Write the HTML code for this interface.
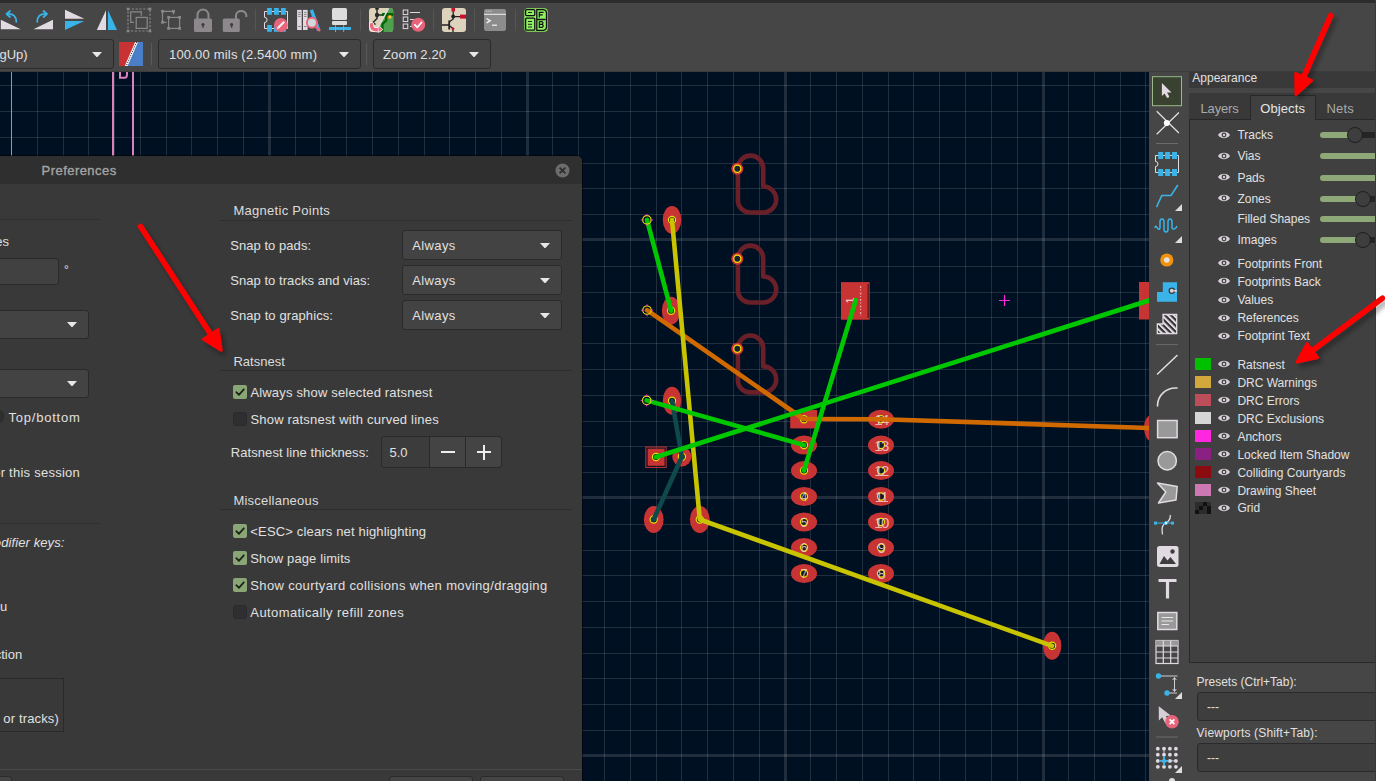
<!DOCTYPE html><html><head><meta charset="utf-8"><style>
html,body{margin:0;padding:0;}
body{width:1385px;height:781px;overflow:hidden;position:relative;background:#ffffff;font-family:"Liberation Sans", sans-serif;}
.b{position:absolute;box-sizing:border-box;}
.t{position:absolute;white-space:nowrap;}
svg{position:absolute;overflow:hidden;}
</style></head><body>
<div class="b" style="left:0px;top:0px;width:1376px;height:3px;background:#2c2c2c;"></div>
<div class="b" style="left:0px;top:3px;width:1376px;height:69px;background:#464646;"></div>
<svg style="left:0;top:72px" width="1149" height="709" viewBox="0 72 1149 709"><rect x="0" y="72" width="1149" height="709" fill="#001023"/><rect x="37" y="72" width="1" height="709" fill="rgba(255,255,255,0.125)"/><rect x="63" y="72" width="1" height="709" fill="rgba(255,255,255,0.125)"/><rect x="88" y="72" width="1" height="709" fill="rgba(255,255,255,0.125)"/><rect x="114" y="72" width="1" height="709" fill="rgba(255,255,255,0.125)"/><rect x="140" y="72" width="1" height="709" fill="rgba(255,255,255,0.125)"/><rect x="166" y="72" width="1" height="709" fill="rgba(255,255,255,0.125)"/><rect x="191" y="72" width="1" height="709" fill="rgba(255,255,255,0.125)"/><rect x="217" y="72" width="1" height="709" fill="rgba(255,255,255,0.125)"/><rect x="243" y="72" width="1" height="709" fill="rgba(255,255,255,0.125)"/><rect x="268" y="72" width="3" height="709" fill="rgba(255,255,255,0.12)"/><rect x="295" y="72" width="1" height="709" fill="rgba(255,255,255,0.125)"/><rect x="320" y="72" width="1" height="709" fill="rgba(255,255,255,0.125)"/><rect x="346" y="72" width="1" height="709" fill="rgba(255,255,255,0.125)"/><rect x="372" y="72" width="1" height="709" fill="rgba(255,255,255,0.125)"/><rect x="398" y="72" width="1" height="709" fill="rgba(255,255,255,0.125)"/><rect x="424" y="72" width="1" height="709" fill="rgba(255,255,255,0.125)"/><rect x="449" y="72" width="1" height="709" fill="rgba(255,255,255,0.125)"/><rect x="475" y="72" width="1" height="709" fill="rgba(255,255,255,0.125)"/><rect x="501" y="72" width="1" height="709" fill="rgba(255,255,255,0.125)"/><rect x="526" y="72" width="3" height="709" fill="rgba(255,255,255,0.12)"/><rect x="552" y="72" width="1" height="709" fill="rgba(255,255,255,0.125)"/><rect x="578" y="72" width="1" height="709" fill="rgba(255,255,255,0.125)"/><rect x="604" y="72" width="1" height="709" fill="rgba(255,255,255,0.125)"/><rect x="630" y="72" width="1" height="709" fill="rgba(255,255,255,0.125)"/><rect x="656" y="72" width="1" height="709" fill="rgba(255,255,255,0.125)"/><rect x="681" y="72" width="1" height="709" fill="rgba(255,255,255,0.125)"/><rect x="707" y="72" width="1" height="709" fill="rgba(255,255,255,0.125)"/><rect x="733" y="72" width="1" height="709" fill="rgba(255,255,255,0.125)"/><rect x="759" y="72" width="1" height="709" fill="rgba(255,255,255,0.125)"/><rect x="784" y="72" width="3" height="709" fill="rgba(255,255,255,0.12)"/><rect x="810" y="72" width="1" height="709" fill="rgba(255,255,255,0.125)"/><rect x="836" y="72" width="1" height="709" fill="rgba(255,255,255,0.125)"/><rect x="862" y="72" width="1" height="709" fill="rgba(255,255,255,0.125)"/><rect x="888" y="72" width="1" height="709" fill="rgba(255,255,255,0.125)"/><rect x="913" y="72" width="1" height="709" fill="rgba(255,255,255,0.125)"/><rect x="939" y="72" width="1" height="709" fill="rgba(255,255,255,0.125)"/><rect x="965" y="72" width="1" height="709" fill="rgba(255,255,255,0.125)"/><rect x="991" y="72" width="1" height="709" fill="rgba(255,255,255,0.125)"/><rect x="1017" y="72" width="1" height="709" fill="rgba(255,255,255,0.125)"/><rect x="1042" y="72" width="3" height="709" fill="rgba(255,255,255,0.12)"/><rect x="1068" y="72" width="1" height="709" fill="rgba(255,255,255,0.125)"/><rect x="1094" y="72" width="1" height="709" fill="rgba(255,255,255,0.125)"/><rect x="1120" y="72" width="1" height="709" fill="rgba(255,255,255,0.125)"/><rect x="1145" y="72" width="1" height="709" fill="rgba(255,255,255,0.125)"/><rect x="0" y="85" width="1149" height="1" fill="rgba(255,255,255,0.125)"/><rect x="0" y="111" width="1149" height="1" fill="rgba(255,255,255,0.125)"/><rect x="0" y="137" width="1149" height="1" fill="rgba(255,255,255,0.125)"/><rect x="0" y="163" width="1149" height="1" fill="rgba(255,255,255,0.125)"/><rect x="0" y="188" width="1149" height="1" fill="rgba(255,255,255,0.125)"/><rect x="0" y="214" width="1149" height="1" fill="rgba(255,255,255,0.125)"/><rect x="0" y="238" width="1149" height="3" fill="rgba(255,255,255,0.12)"/><rect x="0" y="266" width="1149" height="1" fill="rgba(255,255,255,0.125)"/><rect x="0" y="292" width="1149" height="1" fill="rgba(255,255,255,0.125)"/><rect x="0" y="317" width="1149" height="1" fill="rgba(255,255,255,0.125)"/><rect x="0" y="343" width="1149" height="1" fill="rgba(255,255,255,0.125)"/><rect x="0" y="369" width="1149" height="1" fill="rgba(255,255,255,0.125)"/><rect x="0" y="395" width="1149" height="1" fill="rgba(255,255,255,0.125)"/><rect x="0" y="421" width="1149" height="1" fill="rgba(255,255,255,0.125)"/><rect x="0" y="446" width="1149" height="1" fill="rgba(255,255,255,0.125)"/><rect x="0" y="472" width="1149" height="1" fill="rgba(255,255,255,0.125)"/><rect x="0" y="496" width="1149" height="3" fill="rgba(255,255,255,0.12)"/><rect x="0" y="524" width="1149" height="1" fill="rgba(255,255,255,0.125)"/><rect x="0" y="550" width="1149" height="1" fill="rgba(255,255,255,0.125)"/><rect x="0" y="575" width="1149" height="1" fill="rgba(255,255,255,0.125)"/><rect x="0" y="601" width="1149" height="1" fill="rgba(255,255,255,0.125)"/><rect x="0" y="627" width="1149" height="1" fill="rgba(255,255,255,0.125)"/><rect x="0" y="653" width="1149" height="1" fill="rgba(255,255,255,0.125)"/><rect x="0" y="678" width="1149" height="1" fill="rgba(255,255,255,0.125)"/><rect x="0" y="704" width="1149" height="1" fill="rgba(255,255,255,0.125)"/><rect x="0" y="730" width="1149" height="1" fill="rgba(255,255,255,0.125)"/><rect x="0" y="754" width="1149" height="3" fill="rgba(255,255,255,0.12)"/><rect x="11" y="72" width="1" height="709" fill="#9a9a9a"/><rect x="112" y="72" width="2" height="100" fill="#dc80bf"/><rect x="132" y="72" width="2" height="100" fill="#dc80bf"/><path d="M120 72 V77.8 H124.6 Q127 77.8 127 74.6 V72" fill="none" stroke="#dc80bf" stroke-width="2"/><path d="M737.9,168.8 L737.9,168.3 A12.65 12.65 0 0 1 763.2,168.3 L763.2,186.5 A13 13 0 0 1 763.2,212.5 L749.9,212.5 A12 12 0 0 1 737.9,200.5 Z" fill="none" stroke="#6a2029" stroke-width="4.6" stroke-linejoin="round"/><circle cx="737.3" cy="168.8" r="6" fill="#d03636"/><circle cx="737.3" cy="168.8" r="3.6" fill="#1a2230" stroke="#f0e000" stroke-width="1.3"/><path d="M737.9,258.8 L737.9,258.3 A12.65 12.65 0 0 1 763.2,258.3 L763.2,276.5 A13 13 0 0 1 763.2,302.5 L749.9,302.5 A12 12 0 0 1 737.9,290.5 Z" fill="none" stroke="#6a2029" stroke-width="4.6" stroke-linejoin="round"/><circle cx="737.3" cy="258.8" r="6" fill="#d03636"/><circle cx="737.3" cy="258.8" r="3.6" fill="#1a2230" stroke="#f0e000" stroke-width="1.3"/><path d="M737.9,348.7 L737.9,348.2 A12.65 12.65 0 0 1 763.2,348.2 L763.2,366.4 A13 13 0 0 1 763.2,392.4 L749.9,392.4 A12 12 0 0 1 737.9,380.4 Z" fill="none" stroke="#6a2029" stroke-width="4.6" stroke-linejoin="round"/><circle cx="737.3" cy="348.7" r="6" fill="#d03636"/><circle cx="737.3" cy="348.7" r="3.6" fill="#1a2230" stroke="#f0e000" stroke-width="1.3"/><ellipse cx="672" cy="219.9" rx="9.25" ry="14.0" fill="#c83434"/><ellipse cx="671.1" cy="310.7" rx="9.25" ry="14.0" fill="#c83434"/><ellipse cx="672" cy="400.7" rx="9.25" ry="14.0" fill="#c83434"/><ellipse cx="1052.1" cy="645.8" rx="9.25" ry="14.0" fill="#c83434"/><ellipse cx="653.7" cy="519.5" rx="9.9" ry="13.5" fill="#c83434"/><ellipse cx="699.8" cy="519.5" rx="9.9" ry="13.5" fill="#c83434"/><rect x="645.9" y="447" width="20.2" height="20.4" fill="none" stroke="#c83434" stroke-width="1"/><rect x="647.6" y="448.6" width="17" height="17.2" fill="#c83434"/><circle cx="681.9" cy="456.8" r="9.6" fill="#c83434"/><rect x="790.2" y="410" width="27" height="18.4" fill="#c83434"/><ellipse cx="804" cy="445.1" rx="13.0" ry="9.5" fill="#c83434"/><ellipse cx="804" cy="470.6" rx="13.0" ry="9.5" fill="#c83434"/><ellipse cx="804" cy="496.5" rx="13.0" ry="9.5" fill="#c83434"/><ellipse cx="804" cy="522" rx="13.0" ry="9.5" fill="#c83434"/><ellipse cx="804" cy="547.6" rx="13.0" ry="9.5" fill="#c83434"/><ellipse cx="804" cy="573.5" rx="13.0" ry="9.5" fill="#c83434"/><ellipse cx="881" cy="419.2" rx="13.0" ry="9.5" fill="#c83434"/><ellipse cx="881" cy="445.1" rx="13.0" ry="9.5" fill="#c83434"/><ellipse cx="881" cy="470.6" rx="13.0" ry="9.5" fill="#c83434"/><ellipse cx="881" cy="496.5" rx="13.0" ry="9.5" fill="#c83434"/><ellipse cx="881" cy="522" rx="13.0" ry="9.5" fill="#c83434"/><ellipse cx="881" cy="547.6" rx="13.0" ry="9.5" fill="#c83434"/><ellipse cx="881" cy="573.5" rx="13.0" ry="9.5" fill="#c83434"/><rect x="841" y="282.1" width="28.7" height="37.6" fill="#c83434"/><rect x="867.6" y="284" width="1" height="34" fill="#3a1010"/><text x="0" y="0" transform="translate(853.5,300.5) rotate(-90)" font-family="Liberation Sans" font-size="11" fill="#f8d8d8" text-anchor="middle">1</text><path d="M860.6 286 V316" stroke="#f0c0c0" stroke-width="1.3" stroke-dasharray="2 1.5 1 2" opacity="0.8"/><rect x="1139" y="282" width="12" height="37.5" fill="#c83434"/><ellipse cx="1153" cy="428" rx="9" ry="14" fill="#c83434"/><circle cx="672" cy="219.9" r="3.6" fill="#141c28" stroke="#e8e000" stroke-width="1.2"/><circle cx="671.1" cy="310.7" r="3.6" fill="#141c28" stroke="#e8e000" stroke-width="1.2"/><circle cx="672" cy="400.7" r="3.6" fill="#141c28" stroke="#e8e000" stroke-width="1.2"/><circle cx="653.7" cy="519.5" r="3.6" fill="#141c28" stroke="#e8e000" stroke-width="1.2"/><circle cx="699.8" cy="519.5" r="3.6" fill="#141c28" stroke="#e8e000" stroke-width="1.2"/><circle cx="1052.1" cy="645.8" r="3.6" fill="#141c28" stroke="#e8e000" stroke-width="1.2"/><circle cx="656" cy="457" r="3.6" fill="#141c28" stroke="#e8e000" stroke-width="1.2"/><circle cx="681.9" cy="456.8" r="3.6" fill="#141c28" stroke="#e8e000" stroke-width="1.2"/><circle cx="804" cy="419.2" r="3.6" fill="#141c28" stroke="#e8e000" stroke-width="1.2"/><circle cx="881" cy="419.2" r="3.6" fill="#141c28" stroke="#e8e000" stroke-width="1.2"/><circle cx="804" cy="445.1" r="3.6" fill="#141c28" stroke="#e8e000" stroke-width="1.2"/><circle cx="881" cy="445.1" r="3.6" fill="#141c28" stroke="#e8e000" stroke-width="1.2"/><circle cx="804" cy="470.6" r="3.6" fill="#141c28" stroke="#e8e000" stroke-width="1.2"/><circle cx="881" cy="470.6" r="3.6" fill="#141c28" stroke="#e8e000" stroke-width="1.2"/><circle cx="804" cy="496.5" r="3.6" fill="#141c28" stroke="#e8e000" stroke-width="1.2"/><circle cx="881" cy="496.5" r="3.6" fill="#141c28" stroke="#e8e000" stroke-width="1.2"/><circle cx="804" cy="522" r="3.6" fill="#141c28" stroke="#e8e000" stroke-width="1.2"/><circle cx="881" cy="522" r="3.6" fill="#141c28" stroke="#e8e000" stroke-width="1.2"/><circle cx="804" cy="547.6" r="3.6" fill="#141c28" stroke="#e8e000" stroke-width="1.2"/><circle cx="881" cy="547.6" r="3.6" fill="#141c28" stroke="#e8e000" stroke-width="1.2"/><circle cx="804" cy="573.5" r="3.6" fill="#141c28" stroke="#e8e000" stroke-width="1.2"/><circle cx="881" cy="573.5" r="3.6" fill="#141c28" stroke="#e8e000" stroke-width="1.2"/><text x="881" y="424.7" font-family="Liberation Sans" font-size="15" fill="#f8d8d8" fill-opacity="0.8" text-anchor="middle" letter-spacing="-1.5">14</text><text x="881" y="450.6" font-family="Liberation Sans" font-size="15" fill="#f8d8d8" fill-opacity="0.8" text-anchor="middle" letter-spacing="-1.5">13</text><text x="881" y="476.1" font-family="Liberation Sans" font-size="15" fill="#f8d8d8" fill-opacity="0.8" text-anchor="middle" letter-spacing="-1.5">12</text><text x="881" y="502.0" font-family="Liberation Sans" font-size="15" fill="#f8d8d8" fill-opacity="0.8" text-anchor="middle" letter-spacing="-1.5">11</text><text x="881" y="527.5" font-family="Liberation Sans" font-size="15" fill="#f8d8d8" fill-opacity="0.8" text-anchor="middle" letter-spacing="-1.5">10</text><text x="881" y="553.1" font-family="Liberation Sans" font-size="15" fill="#f8d8d8" fill-opacity="0.8" text-anchor="middle" letter-spacing="-1.5">9</text><text x="881" y="579.0" font-family="Liberation Sans" font-size="15" fill="#f8d8d8" fill-opacity="0.8" text-anchor="middle" letter-spacing="-1.5">8</text><text x="804" y="501.0" font-family="Liberation Sans" font-size="12" fill="#f8d8d8" fill-opacity="0.8" text-anchor="middle">4</text><text x="804" y="526.5" font-family="Liberation Sans" font-size="12" fill="#f8d8d8" fill-opacity="0.8" text-anchor="middle">5</text><text x="804" y="552.1" font-family="Liberation Sans" font-size="12" fill="#f8d8d8" fill-opacity="0.8" text-anchor="middle">6</text><text x="804" y="578.0" font-family="Liberation Sans" font-size="12" fill="#f8d8d8" fill-opacity="0.8" text-anchor="middle">7</text><path d="M672,400.7 L681.9,456.8 L653.7,519.5" fill="none" stroke="#0e4a4c" stroke-width="4.6" stroke-linecap="round" stroke-linejoin="round"/><path d="M647,310.2 L803.5,419" fill="none" stroke="#d06a00" stroke-width="4.6" stroke-linecap="round" stroke-linejoin="round"/><path d="M803.5,419 L881,419.2 L1160,428.3" fill="none" stroke="#d06a00" stroke-width="4.6" stroke-linecap="round" stroke-linejoin="round"/><path d="M672,219.9 L699.8,519.5 L1052.1,645.8" fill="none" stroke="#c8c400" stroke-width="4.6" stroke-linecap="round" stroke-linejoin="round"/><path d="M647,219.9 L671.1,310.7" fill="none" stroke="#00c800" stroke-width="4.6" stroke-linecap="round" stroke-linejoin="round"/><path d="M855.8,300 L804,470.6" fill="none" stroke="#00c800" stroke-width="4.6" stroke-linecap="round" stroke-linejoin="round"/><path d="M656,457 L1160,297" fill="none" stroke="#00c800" stroke-width="4.6" stroke-linecap="round" stroke-linejoin="round"/><path d="M646.7,400.4 L804,445.1" fill="none" stroke="#00c800" stroke-width="4.6" stroke-linecap="round" stroke-linejoin="round"/><circle cx="646.9" cy="219.9" r="4.2" fill="none" stroke="#e8e000" stroke-width="1.2"/><path d="M646.9 213.9 V215.9 M646.9 223.9 V225.9 M640.9 219.9 H642.9 M650.9 219.9 H652.9" stroke="#ff30e0" stroke-width="1"/><circle cx="647" cy="310.2" r="4.2" fill="none" stroke="#e8e000" stroke-width="1.2"/><path d="M647 304.2 V306.2 M647 314.2 V316.2 M641 310.2 H643 M651 310.2 H653" stroke="#ff30e0" stroke-width="1"/><circle cx="646.7" cy="400.4" r="4.2" fill="none" stroke="#e8e000" stroke-width="1.2"/><path d="M646.7 394.4 V396.4 M646.7 404.4 V406.4 M640.7 400.4 H642.7 M650.7 400.4 H652.7" stroke="#ff30e0" stroke-width="1"/><path d="M999 300.5 H1010 M1004.5 295 V306" stroke="#ff26e2" stroke-width="1.2"/></svg>
<svg style="left:0px;top:0px;" width="560" height="40" viewBox="0 0 560 40"><path d="M0.8 19.7 L20.7 29.3 L0.8 29.3 Z" fill="#e2dae2"/><path d="M16.3 21.8 C16.3 16.5 13 13.5 8 13.8" fill="none" stroke="#3ab4e8" stroke-width="1.8" stroke-linecap="round"/><path d="M10 11 L6.5 14 L10 17" fill="none" stroke="#3ab4e8" stroke-width="1.8" stroke-linecap="round" stroke-linejoin="round"/><path d="M53 19.7 L33.4 29.3 L53 29.3 Z" fill="#e2dae2"/><path d="M37.2 21.8 C37.2 16.5 40.5 13.5 45.5 13.8" fill="none" stroke="#3ab4e8" stroke-width="1.8" stroke-linecap="round"/><path d="M43.5 11 L47 14 L43.5 17" fill="none" stroke="#3ab4e8" stroke-width="1.8" stroke-linecap="round" stroke-linejoin="round"/><path d="M65 9.8 L84.4 18.8 L65 18.8 Z" fill="#e2dae2"/><path d="M65 21 L84.4 21 L65 30 Z" fill="#3ab4e8"/><path d="M106 10.2 L106 30 L96.8 30 Z" fill="#e2dae2"/><path d="M108 10.2 L108 30 L117 30 Z" fill="#3ab4e8"/><rect x="128" y="9" width="22" height="22" fill="none" stroke="#8a888a" stroke-width="1.2" stroke-dasharray="2.2 1.6"/><rect x="126.7" y="7.7" width="2.6" height="2.6" fill="#8a888a"/><rect x="148.7" y="7.7" width="2.6" height="2.6" fill="#8a888a"/><rect x="126.7" y="29.7" width="2.6" height="2.6" fill="#8a888a"/><rect x="148.7" y="29.7" width="2.6" height="2.6" fill="#8a888a"/><path d="M141.3 15.8 V11.8 H130.7 V22.4 H134" fill="none" stroke="#8a888a" stroke-width="1.2"/><rect x="136.2" y="17.4" width="11" height="11" fill="none" stroke="#8a888a" stroke-width="1.2"/><path d="M173.5 14.5 V11.3 H162.5 V22.3 H166.5" fill="none" stroke="#8a888a" stroke-width="1.2"/><rect x="168.6" y="17.4" width="11" height="11" fill="none" stroke="#8a888a" stroke-width="1.2"/><rect x="161.1" y="9.9" width="2.8" height="2.8" fill="#8a888a"/><rect x="172.1" y="9.9" width="2.8" height="2.8" fill="#8a888a"/><rect x="161.1" y="20.900000000000002" width="2.8" height="2.8" fill="#8a888a"/><rect x="167.2" y="15.999999999999998" width="2.8" height="2.8" fill="#8a888a"/><rect x="178.2" y="15.999999999999998" width="2.8" height="2.8" fill="#8a888a"/><rect x="167.2" y="27.0" width="2.8" height="2.8" fill="#8a888a"/><rect x="178.2" y="27.0" width="2.8" height="2.8" fill="#8a888a"/><path d="M197.5 19 V15 A5.5 5.5 0 0 1 208.5 15 V19" fill="none" stroke="#8c888c" stroke-width="2"/><rect x="194" y="18.5" width="18" height="13.5" rx="1.5" fill="#8c888c"/><circle cx="203" cy="24.5" r="1.6" fill="#3d3d3d"/><rect x="202.3" y="24.5" width="1.4" height="3.3" fill="#3d3d3d"/><path d="M236 19 V15 A5.3 5.3 0 0 1 246.3 15 V17" fill="none" stroke="#8c888c" stroke-width="2"/><rect x="222.8" y="18.5" width="17" height="13.5" rx="1.5" fill="#8c888c"/><circle cx="231.6" cy="24.5" r="1.6" fill="#3d3d3d"/><rect x="230.9" y="24.5" width="1.4" height="3.3" fill="#3d3d3d"/><rect x="255.0" y="9" width="1" height="22" fill="#555555"/><rect x="360.0" y="9" width="1" height="22" fill="#555555"/><rect x="433.0" y="9" width="1" height="22" fill="#555555"/><rect x="474.0" y="9" width="1" height="22" fill="#555555"/><rect x="515.0" y="9" width="1" height="22" fill="#555555"/><path d="M264.5 11.5 H287.5 V28.5 H264.5 V22.5 A2.6 2.6 0 0 0 264.5 17.3 Z" fill="none" stroke="#e2dae2" stroke-width="1"/><rect x="267.1" y="8" width="4.8" height="6.8" fill="#3ab4e8"/><rect x="267.1" y="25" width="4.8" height="6.8" fill="#3ab4e8"/><rect x="274" y="8" width="4.8" height="6.8" fill="#3ab4e8"/><rect x="274" y="25" width="4.8" height="6.8" fill="#3ab4e8"/><rect x="281" y="8" width="4.8" height="6.8" fill="#3ab4e8"/><rect x="281" y="25" width="4.8" height="6.8" fill="#3ab4e8"/><circle cx="280.9" cy="25" r="6.9" fill="#e8647a"/><path d="M278.2 27.8 L284.2 21.8" stroke="#f4f0f4" stroke-width="2.2"/><path d="M276.8 29.2 L277.4 26.9 L279 28.6 Z" fill="#f4f0f4"/><rect x="297.1" y="9.9" width="4.6" height="20.1" fill="#e2dae2"/><rect x="303" y="9.9" width="4.6" height="20.1" fill="#e2dae2"/><path d="M298.2 12.4 H300.6 M298.2 14.4 H300.6 M298.2 16.4 H300.6 M298.2 26.5 H300.6 M304.1 12.4 H306.5 M304.1 14.4 H306.5 M304.1 16.4 H306.5 M304.1 26.5 H306.5" stroke="#7a747a" stroke-width="0.9"/><path d="M309.8 10.6 L313 9.2 L320.3 29.6 L317 31 Z" fill="#3ab4e8"/><circle cx="311.9" cy="22.7" r="5" fill="#cfd8dc" stroke="#e8647a" stroke-width="1.9"/><path d="M315.6 26.6 L319.4 30.4" stroke="#e8647a" stroke-width="2.3" stroke-linecap="round"/><rect x="332" y="8" width="15" height="12" rx="1.5" fill="#dcdcdc"/><rect x="332" y="21" width="15" height="4" rx="1" fill="#dcdcdc"/><rect x="329" y="27" width="22" height="3" fill="#3ab4e8"/><rect x="335" y="25" width="0.8" height="7" fill="#aaaaaa"/><rect x="343.3" y="25" width="0.8" height="7" fill="#aaaaaa"/><g transform="translate(369,8)"><rect x="0" y="0" width="24.2" height="24" rx="3.2" fill="#ddd3b9"/><path d="M19.3 0 H21 A3.2 3.2 0 0 1 24.2 3.2 V20.8 A3.2 3.2 0 0 1 21 24 H11 L10.5 17 Z" fill="#4e9f4e"/><path d="M13 6.5 H24.2" stroke="#006400" stroke-width="3"/><path d="M17.2 7 V12.5 L13.5 16 V24" fill="none" stroke="#006400" stroke-width="2.2"/><path d="M19.6 0.4 L10 18" stroke="#e6dee6" stroke-width="1.4"/><circle cx="20.9" cy="9" r="2.1" fill="#f0960a"/><rect x="20.2" y="8.3" width="1.4" height="1.4" fill="#fff"/><rect x="6.2" y="0" width="3.6" height="1.6" fill="#222"/><path d="M8 1 V11 M8 7 H13 M8 10.5 L4 14.5 L6.5 16.5" fill="none" stroke="#2a2a2a" stroke-width="1.5"/><circle cx="8" cy="7" r="2.2" fill="#2a2a2a"/><path d="M2.5 16.5 C2.5 21 5 22.5 10 21.5" fill="none" stroke="#fff" stroke-width="5" stroke-linecap="round"/><path d="M2.5 16.5 C2.5 21 5 22.5 10 21.5" fill="none" stroke="#ee6680" stroke-width="3.4" stroke-linecap="round"/><path d="M9 18 L14 21.5 L9.5 24.5 Z" fill="#ee6680" stroke="#fff" stroke-width="0.6"/></g><rect x="403.2" y="10" width="4.6" height="4.6" fill="none" stroke="#e2dae2" stroke-width="1"/><rect x="403.2" y="17" width="4.6" height="4.6" fill="none" stroke="#e2dae2" stroke-width="1"/><rect x="403.2" y="24" width="4.6" height="4.6" fill="none" stroke="#e2dae2" stroke-width="1"/><path d="M410 12.5 H420 M410 19.5 H414 M410 26.5 H412" stroke="#e2dae2" stroke-width="1"/><circle cx="418.2" cy="24.8" r="7" fill="#e8647a"/><path d="M414.8 24.8 L417.4 27.3 L421.6 22.4" fill="none" stroke="#fff" stroke-width="1.7" stroke-linecap="round" stroke-linejoin="round"/><g transform="translate(442,8)"><rect x="0" y="0" width="24" height="24" rx="3.2" fill="#ddd3bd"/><rect x="9.4" y="0" width="3.6" height="3.6" fill="#c8102e"/><rect x="18" y="6.6" width="6" height="4" fill="#c8102e"/><path d="M11.2 3.5 V8.6 H18 M11.2 8.6 V11 L7.8 13.5 M0 17 H7.2 M7.8 18 L11 20.6 V24" fill="none" stroke="#222" stroke-width="1.3"/><path d="M7.2 12.5 V21.5" stroke="#222" stroke-width="1.8"/><circle cx="11.2" cy="8.6" r="2" fill="#222"/><circle cx="11" cy="20.8" r="1.4" fill="#c8102e"/></g><rect x="484" y="8.9" width="22" height="22" rx="2" fill="#8c8c8c"/><rect x="484" y="13.8" width="22" height="1" fill="#f0f0f0"/><path d="M486 11.2 H492" stroke="#f0f0f0" stroke-width="0.8" stroke-dasharray="1 0.8"/><path d="M486.5 18.5 L490.2 20.7 L486.5 23" fill="none" stroke="#f4f4f4" stroke-width="1.4"/><path d="M492 25.2 H497" stroke="#f4f4f4" stroke-width="1.2"/><rect x="524.3" y="8.2" width="23.4" height="23.6" rx="3.5" fill="#8ef062"/><rect x="525.6" y="9.6" width="9.2" height="6" rx="1" fill="none" stroke="#111" stroke-width="1.3"/><rect x="525.6" y="18.2" width="9.2" height="12" rx="1" fill="none" stroke="#111" stroke-width="1.3"/><path d="M536.8 9.6 H543.5 A3.5 3.5 0 0 1 546.5 13 V27 A3.5 3.5 0 0 1 543.5 30.4 H536.8 Z M536.8 19.5 H545.5" fill="none" stroke="#111" stroke-width="1.3"/><path d="M528 12.5 H532 M528 21.5 H532 M528 24.3 H532 M528 27 H532" stroke="#111" stroke-width="0.9"/><path d="M539.3 11.8 V17.6 M539.3 12.3 H543.6 M539.3 14.8 H542.8" fill="none" stroke="#111" stroke-width="1.2"/><path d="M539.3 21.5 V27.4 H542 A1.6 1.6 0 0 0 542 24.3 H539.3 M539.3 21.6 H541.6 A1.35 1.35 0 0 1 541.6 24.3" fill="none" stroke="#111" stroke-width="1.2"/></svg>
<div class="b" style="left:0px;top:71px;width:1376px;height:1px;background:#3c3c3c;"></div>
<div class="b" style="left:-4px;top:39px;width:117.5px;height:30px;background:#444444;border:1px solid #2b2b2b;border-radius:3px;"></div>
<div class="t" style="left:-60px;top:47.5px;width:87.7px;text-align:right;font-size:13px;line-height:13px;color:#e0e0e0;">F.Cu (PgUp)</div>
<svg style="left:92.0px;top:51.75px;" width="10" height="5.5" viewBox="0 0 10 5.5"><path d="M0 0 H10 L5.0 5.5 Z" fill="#e8e8e8"/></svg>
<svg style="left:119px;top:41.8px;" width="24" height="24.2" viewBox="0 0 24 24.2"><rect width="24" height="24.2" fill="#4a7fc8"/><path d="M0 0 H17 L6.5 24.2 H0 Z" fill="#c83232"/><path d="M17.6 0 L7.1 24.2" stroke="#fff" stroke-width="2.6"/><path d="M17.6 0 L7.1 24.2" stroke="#222" stroke-width="1" stroke-dasharray="1.2 1.2"/></svg>
<div class="b" style="left:151px;top:43px;width:1px;height:22px;background:#5a5a5a;"></div>
<div class="b" style="left:157.5px;top:39px;width:203px;height:30px;background:#444444;border:1px solid #2b2b2b;border-radius:3px;"></div>
<div class="t" style="left:169.0px;top:48.0px;font-size:13px;line-height:13px;color:#e0e0e0;letter-spacing:0.190px;">100.00 mils (2.5400 mm)</div>
<svg style="left:339.0px;top:51.75px;" width="10" height="5.5" viewBox="0 0 10 5.5"><path d="M0 0 H10 L5.0 5.5 Z" fill="#e8e8e8"/></svg>
<div class="b" style="left:366px;top:43px;width:1px;height:22px;background:#5a5a5a;"></div>
<div class="b" style="left:372.5px;top:39px;width:118px;height:30px;background:#444444;border:1px solid #2b2b2b;border-radius:3px;"></div>
<div class="t" style="left:383.0px;top:48.0px;font-size:13px;line-height:13px;color:#e0e0e0;letter-spacing:0.105px;">Zoom 2.20</div>
<svg style="left:469.0px;top:51.75px;" width="10" height="5.5" viewBox="0 0 10 5.5"><path d="M0 0 H10 L5.0 5.5 Z" fill="#e8e8e8"/></svg>
<div class="b" style="left:1149px;top:72px;width:40px;height:709px;background:#464646;"></div>
<svg style="left:1149px;top:72px;" width="40" height="709" viewBox="0 0 40 709"><rect x="3.5" y="4.7" width="29" height="29" fill="#394230" stroke="#9ab888" stroke-width="1"/><path d="M12.9 10.9 L12.9 24 L15.6 21.4 L17.6 25.2 Q18.4 26.2 19.6 25.4 Q20.4 24.8 19.9 23.8 L18 20.6 L22.5 20.5 Z" fill="#e2dae2"/><path d="M7.7 39.2 L29.9 61 M29.9 40.5 L7.7 62.3" stroke="#e8e0e8" stroke-width="1.2"/><circle cx="17.8" cy="51" r="3" fill="#fff"/><rect x="7" y="71.0" width="22" height="1" fill="#6a6a6a"/><path d="M6.5 83.5 H29.5 V100.5 H6.5 V94.5 A2.5 2.5 0 0 0 6.5 89.5 Z" fill="none" stroke="#e2dae2" stroke-width="1"/><rect x="9.2" y="80" width="5" height="7" fill="#3ab4e8"/><rect x="9.2" y="97" width="5" height="7" fill="#3ab4e8"/><rect x="16.1" y="80" width="5" height="7" fill="#3ab4e8"/><rect x="16.1" y="97" width="5" height="7" fill="#3ab4e8"/><rect x="23" y="80" width="5" height="7" fill="#3ab4e8"/><rect x="23" y="97" width="5" height="7" fill="#3ab4e8"/><path d="M7.8 134.5 L12.8 123.5 H22 L28.5 113.5" fill="none" stroke="#3ab4e8" stroke-width="1.6" stroke-linecap="round"/><path d="M26 139 H33 V132 Z" fill="#dddddd"/><path d="M6 156 C7 150 9 161 11 156 V150 C11 146 15 146 15 150 V157 C15 161 19 161 19 157 V150 C19 146 23 146 23 150 V156 C24 158 27 157 28 154" fill="none" stroke="#3ab4e8" stroke-width="1.5"/><path d="M26 171 H33 V164 Z" fill="#dddddd"/><circle cx="17.8" cy="188" r="6.6" fill="#f0920a"/><circle cx="17.8" cy="188" r="2.8" fill="#e4e4e4"/><path d="M8 229.8 V220 H13.8 V210.2 H28 V229.8 Z" fill="#3ab4e8"/><circle cx="22.8" cy="218.8" r="2.6" fill="#d8d0d8" stroke="#3a3a3a" stroke-width="1.3"/><path d="M24.5 218.8 H28" stroke="#e8e0e8" stroke-width="1.4"/><defs><pattern id="hatch" width="4.2" height="4.2" patternUnits="userSpaceOnUse" patternTransform="rotate(-45)"><rect width="4.2" height="4.2" fill="#2e2e2e"/><rect width="2.1" height="4.2" fill="#e2dae2"/></pattern></defs><path d="M8.3 261.5 V252 H14 V242.5 H27.7 V261.5 Z" fill="url(#hatch)" stroke="#e2dae2" stroke-width="1.3"/><rect x="7" y="272.1" width="22" height="1" fill="#6a6a6a"/><path d="M8.5 302 L28 283.5" stroke="#e2dae2" stroke-width="1.6" stroke-linecap="round"/><path d="M8.5 334 A18 18 0 0 1 28 316" fill="none" stroke="#e2dae2" stroke-width="1.6" stroke-linecap="round"/><rect x="8.6" y="348.5" width="19.5" height="17.2" fill="#999999" stroke="#e2dae2" stroke-width="1.5"/><circle cx="18.2" cy="388.7" r="9.2" fill="#999999" stroke="#e2dae2" stroke-width="1.5"/><path d="M8.5 411 L28.2 414.5 L27 428 L9.5 431 L16.8 420 Z" fill="#999999" stroke="#e2dae2" stroke-width="1.5" stroke-linejoin="round"/><path d="M17 451 C22 448 21 445 21.5 443 M17 451 C12 453 13 458 13.5 462.5" fill="none" stroke="#e2dae2" stroke-width="1.3"/><path d="M6.5 451 H23.5" stroke="#3ab4e8" stroke-width="1"/><rect x="5" y="449.6" width="3" height="3" fill="#3ab4e8"/><rect x="22" y="449.6" width="3" height="3" fill="#3ab4e8"/><circle cx="17" cy="451" r="1.6" fill="#fff" stroke="#3ab4e8"/><rect x="8" y="474" width="21.5" height="21" rx="2.5" fill="#e2dae2"/><path d="M10.5 492 L15 484 L18.5 488.5 L21.5 485 L27 492 Z" fill="#3d3d3d"/><circle cx="23.5" cy="479.5" r="2.2" fill="#3d3d3d"/><path d="M9.5 508.5 H27.5 M18.5 508.5 V526.5" stroke="#e2dae2" stroke-width="3.2"/><rect x="8.8" y="540.5" width="19" height="17" fill="#999999" stroke="#e2dae2" stroke-width="1.5"/><path d="M12.5 545.5 H24 M12.5 549 H24 M12.5 552.5 H20" stroke="#e8e8e8" stroke-width="1"/><rect x="7" y="568.5" width="22" height="23" fill="none" stroke="#e2dae2" stroke-width="1.2"/><rect x="7" y="568.5" width="22" height="5.5" fill="#999"/><path d="M7 574 H29 M7 580 H29 M7 586 H29 M14.3 568.5 V591.5 M21.7 568.5 V591.5" stroke="#e2dae2" stroke-width="1.2"/><circle cx="9.5" cy="604" r="2.7" fill="#3ab4e8"/><circle cx="18" cy="621" r="2.7" fill="#3ab4e8"/><path d="M12 604 H28.5 M20.5 621 H28 M25.5 606 V619" stroke="#e2dae2" stroke-width="0.9"/><path d="M23.7 608 L25.5 605.5 L27.3 608 M23.7 617 L25.5 619.5 L27.3 617" fill="none" stroke="#e2dae2" stroke-width="0.9"/><path d="M26 627 H33 V620 Z" fill="#dddddd"/><path d="M9.8 634.2 V648.6 L13.2 645.3 L16.4 651.5 L19.6 650 L17 644 L22 643.8 Z" fill="#d6ced6"/><circle cx="23" cy="649.8" r="6.8" fill="#e8647a"/><path d="M20.6 647.4 L25.4 652.2 M25.4 647.4 L20.6 652.2" stroke="#fff" stroke-width="1.7"/><rect x="7" y="664.5" width="22" height="1" fill="#6a6a6a"/><path d="M15 676.7 V688.9 H26.9" fill="none" stroke="#c8c0c8" stroke-width="1"/><circle cx="8.8" cy="676.7" r="1.9" fill="#e2dae2"/><circle cx="8.8" cy="682.7" r="1.9" fill="#e2dae2"/><circle cx="8.8" cy="688.9" r="1.9" fill="#e2dae2"/><circle cx="8.8" cy="694.8" r="1.9" fill="#e2dae2"/><circle cx="15" cy="676.7" r="1.9" fill="#e2dae2"/><circle cx="15" cy="682.7" r="1.9" fill="#e2dae2"/><circle cx="15" cy="688.9" r="1.9" fill="#e2dae2"/><circle cx="15" cy="694.8" r="1.9" fill="#e2dae2"/><circle cx="20.9" cy="676.7" r="1.9" fill="#e2dae2"/><circle cx="20.9" cy="682.7" r="1.9" fill="#e2dae2"/><circle cx="20.9" cy="688.9" r="1.9" fill="#e2dae2"/><circle cx="20.9" cy="694.8" r="1.9" fill="#e2dae2"/><circle cx="26.9" cy="676.7" r="1.9" fill="#e2dae2"/><circle cx="26.9" cy="682.7" r="1.9" fill="#e2dae2"/><circle cx="26.9" cy="688.9" r="1.9" fill="#e2dae2"/><circle cx="26.9" cy="694.8" r="1.9" fill="#e2dae2"/><path d="M10.5 688.9 H19.5 M15 684 V693.5" stroke="#3ab4e8" stroke-width="1.8"/><path d="M26 701 H33 V694 Z" fill="#dddddd"/><circle cx="23" cy="709" r="3" fill="#dddddd"/></svg>
<div class="b" style="left:1189px;top:72px;width:187px;height:709px;background:#464646;"></div>
<div class="b" style="left:1189px;top:72px;width:187px;height:16px;background:#393939;"></div>
<div class="t" style="left:1192.2px;top:72.1px;font-size:12px;line-height:12px;color:#e0e0e0;letter-spacing:0.033px;">Appearance</div>
<div class="b" style="left:1189px;top:93px;width:187px;height:26.5px;background:#393939;"></div>
<div class="b" style="left:1189px;top:119px;width:187px;height:543px;background:#404040;"></div>
<div class="b" style="left:1249.7px;top:95px;width:66px;height:25px;background:#404040;border:1px solid #282828;border-bottom:none;"></div>
<div class="b" style="left:1189px;top:119px;width:187px;height:1px;background:#282828;"></div>
<div class="b" style="left:1250.7px;top:119px;width:64px;height:1px;background:#404040;"></div>
<div class="t" style="left:1200.5px;top:101.7px;font-size:13px;line-height:13px;color:#aaaaaa;letter-spacing:-0.166px;">Layers</div>
<div class="t" style="left:1260.3px;top:101.7px;font-size:13px;line-height:13px;color:#e6e6e6;letter-spacing:0.087px;">Objects</div>
<div class="t" style="left:1326.5px;top:101.7px;font-size:13px;line-height:13px;color:#aaaaaa;letter-spacing:0.155px;">Nets</div>
<div class="b" style="left:1189px;top:119px;width:1px;height:544px;background:#282828;"></div>
<div class="b" style="left:1189px;top:662px;width:187px;height:1px;background:#282828;"></div>
<svg style="left:1217px;top:129.5px;" width="14" height="10" viewBox="0 0 14 10"><path d="M1 5 C3.5 0.8 10.5 0.8 13 5 C10.5 9.2 3.5 9.2 1 5 Z" fill="#d8d0d8"/><circle cx="7" cy="5" r="2.4" fill="#3e3e3e"/><circle cx="7" cy="5" r="1.2" fill="#d8d0d8"/></svg>
<div class="t" style="left:1237.4px;top:129.4px;font-size:12px;line-height:12px;color:#e0e0e0;">Tracks</div>
<div class="b" style="left:1320px;top:132.2px;width:35.40000000000009px;height:6px;background:#8ea878;border-radius:3px 0 0 3px;"></div>
<div class="b" style="left:1355.4px;top:132.2px;width:20.59999999999991px;height:6px;background:#252525;"></div>
<div class="b" style="left:1347.4px;top:127.19999999999999px;width:16px;height:16px;background:#3e3e3e;border:1.3px solid #1e1e1e;border-radius:50%;"></div>
<svg style="left:1217px;top:150.5px;" width="14" height="10" viewBox="0 0 14 10"><path d="M1 5 C3.5 0.8 10.5 0.8 13 5 C10.5 9.2 3.5 9.2 1 5 Z" fill="#d8d0d8"/><circle cx="7" cy="5" r="2.4" fill="#3e3e3e"/><circle cx="7" cy="5" r="1.2" fill="#d8d0d8"/></svg>
<div class="t" style="left:1237.4px;top:150.4px;font-size:12px;line-height:12px;color:#e0e0e0;">Vias</div>
<div class="b" style="left:1320px;top:153.2px;width:66px;height:6px;background:#8ea878;border-radius:3px;"></div>
<svg style="left:1217px;top:171.8px;" width="14" height="10" viewBox="0 0 14 10"><path d="M1 5 C3.5 0.8 10.5 0.8 13 5 C10.5 9.2 3.5 9.2 1 5 Z" fill="#d8d0d8"/><circle cx="7" cy="5" r="2.4" fill="#3e3e3e"/><circle cx="7" cy="5" r="1.2" fill="#d8d0d8"/></svg>
<div class="t" style="left:1237.4px;top:171.7px;font-size:12px;line-height:12px;color:#e0e0e0;">Pads</div>
<div class="b" style="left:1320px;top:174.5px;width:66px;height:6px;background:#8ea878;border-radius:3px;"></div>
<svg style="left:1217px;top:192.8px;" width="14" height="10" viewBox="0 0 14 10"><path d="M1 5 C3.5 0.8 10.5 0.8 13 5 C10.5 9.2 3.5 9.2 1 5 Z" fill="#d8d0d8"/><circle cx="7" cy="5" r="2.4" fill="#3e3e3e"/><circle cx="7" cy="5" r="1.2" fill="#d8d0d8"/></svg>
<div class="t" style="left:1237.4px;top:192.7px;font-size:12px;line-height:12px;color:#e0e0e0;">Zones</div>
<div class="b" style="left:1320px;top:195.5px;width:43.299999999999955px;height:6px;background:#8ea878;border-radius:3px 0 0 3px;"></div>
<div class="b" style="left:1363.3px;top:195.5px;width:12.700000000000045px;height:6px;background:#252525;"></div>
<div class="b" style="left:1355.3px;top:190.5px;width:16px;height:16px;background:#3e3e3e;border:1.3px solid #1e1e1e;border-radius:50%;"></div>
<div class="t" style="left:1237.4px;top:213.4px;font-size:12px;line-height:12px;color:#e0e0e0;">Filled Shapes</div>
<div class="b" style="left:1320px;top:216.2px;width:66px;height:6px;background:#8ea878;border-radius:3px;"></div>
<svg style="left:1217px;top:234.4px;" width="14" height="10" viewBox="0 0 14 10"><path d="M1 5 C3.5 0.8 10.5 0.8 13 5 C10.5 9.2 3.5 9.2 1 5 Z" fill="#d8d0d8"/><circle cx="7" cy="5" r="2.4" fill="#3e3e3e"/><circle cx="7" cy="5" r="1.2" fill="#d8d0d8"/></svg>
<div class="t" style="left:1237.4px;top:234.3px;font-size:12px;line-height:12px;color:#e0e0e0;">Images</div>
<div class="b" style="left:1320px;top:237.1px;width:43.299999999999955px;height:6px;background:#8ea878;border-radius:3px 0 0 3px;"></div>
<div class="b" style="left:1363.3px;top:237.1px;width:12.700000000000045px;height:6px;background:#252525;"></div>
<div class="b" style="left:1355.3px;top:232.1px;width:16px;height:16px;background:#3e3e3e;border:1.3px solid #1e1e1e;border-radius:50%;"></div>
<svg style="left:1217px;top:258.3px;" width="14" height="10" viewBox="0 0 14 10"><path d="M1 5 C3.5 0.8 10.5 0.8 13 5 C10.5 9.2 3.5 9.2 1 5 Z" fill="#d8d0d8"/><circle cx="7" cy="5" r="2.4" fill="#3e3e3e"/><circle cx="7" cy="5" r="1.2" fill="#d8d0d8"/></svg>
<div class="t" style="left:1237.4px;top:258.2px;font-size:12px;line-height:12px;color:#e0e0e0;">Footprints Front</div>
<svg style="left:1217px;top:276.3px;" width="14" height="10" viewBox="0 0 14 10"><path d="M1 5 C3.5 0.8 10.5 0.8 13 5 C10.5 9.2 3.5 9.2 1 5 Z" fill="#d8d0d8"/><circle cx="7" cy="5" r="2.4" fill="#3e3e3e"/><circle cx="7" cy="5" r="1.2" fill="#d8d0d8"/></svg>
<div class="t" style="left:1237.4px;top:276.2px;font-size:12px;line-height:12px;color:#e0e0e0;">Footprints Back</div>
<svg style="left:1217px;top:294.5px;" width="14" height="10" viewBox="0 0 14 10"><path d="M1 5 C3.5 0.8 10.5 0.8 13 5 C10.5 9.2 3.5 9.2 1 5 Z" fill="#d8d0d8"/><circle cx="7" cy="5" r="2.4" fill="#3e3e3e"/><circle cx="7" cy="5" r="1.2" fill="#d8d0d8"/></svg>
<div class="t" style="left:1237.4px;top:294.4px;font-size:12px;line-height:12px;color:#e0e0e0;">Values</div>
<svg style="left:1217px;top:312.5px;" width="14" height="10" viewBox="0 0 14 10"><path d="M1 5 C3.5 0.8 10.5 0.8 13 5 C10.5 9.2 3.5 9.2 1 5 Z" fill="#d8d0d8"/><circle cx="7" cy="5" r="2.4" fill="#3e3e3e"/><circle cx="7" cy="5" r="1.2" fill="#d8d0d8"/></svg>
<div class="t" style="left:1237.4px;top:312.4px;font-size:12px;line-height:12px;color:#e0e0e0;">References</div>
<svg style="left:1217px;top:330.5px;" width="14" height="10" viewBox="0 0 14 10"><path d="M1 5 C3.5 0.8 10.5 0.8 13 5 C10.5 9.2 3.5 9.2 1 5 Z" fill="#d8d0d8"/><circle cx="7" cy="5" r="2.4" fill="#3e3e3e"/><circle cx="7" cy="5" r="1.2" fill="#d8d0d8"/></svg>
<div class="t" style="left:1237.4px;top:330.4px;font-size:12px;line-height:12px;color:#e0e0e0;">Footprint Text</div>
<div class="b" style="left:1195px;top:357.6px;width:16px;height:12px;background:#00c000;"></div>
<svg style="left:1217px;top:358.6px;" width="14" height="10" viewBox="0 0 14 10"><path d="M1 5 C3.5 0.8 10.5 0.8 13 5 C10.5 9.2 3.5 9.2 1 5 Z" fill="#d8d0d8"/><circle cx="7" cy="5" r="2.4" fill="#3e3e3e"/><circle cx="7" cy="5" r="1.2" fill="#d8d0d8"/></svg>
<div class="t" style="left:1237.4px;top:358.5px;font-size:12px;line-height:12px;color:#e0e0e0;">Ratsnest</div>
<div class="b" style="left:1195px;top:375.6px;width:16px;height:12px;background:#d2a83c;"></div>
<svg style="left:1217px;top:376.6px;" width="14" height="10" viewBox="0 0 14 10"><path d="M1 5 C3.5 0.8 10.5 0.8 13 5 C10.5 9.2 3.5 9.2 1 5 Z" fill="#d8d0d8"/><circle cx="7" cy="5" r="2.4" fill="#3e3e3e"/><circle cx="7" cy="5" r="1.2" fill="#d8d0d8"/></svg>
<div class="t" style="left:1237.4px;top:376.5px;font-size:12px;line-height:12px;color:#e0e0e0;">DRC Warnings</div>
<div class="b" style="left:1195px;top:393.6px;width:16px;height:12px;background:#bd4d5a;"></div>
<svg style="left:1217px;top:394.6px;" width="14" height="10" viewBox="0 0 14 10"><path d="M1 5 C3.5 0.8 10.5 0.8 13 5 C10.5 9.2 3.5 9.2 1 5 Z" fill="#d8d0d8"/><circle cx="7" cy="5" r="2.4" fill="#3e3e3e"/><circle cx="7" cy="5" r="1.2" fill="#d8d0d8"/></svg>
<div class="t" style="left:1237.4px;top:394.5px;font-size:12px;line-height:12px;color:#e0e0e0;">DRC Errors</div>
<div class="b" style="left:1195px;top:411.6px;width:16px;height:12px;background:#d6d6d6;"></div>
<svg style="left:1217px;top:412.6px;" width="14" height="10" viewBox="0 0 14 10"><path d="M1 5 C3.5 0.8 10.5 0.8 13 5 C10.5 9.2 3.5 9.2 1 5 Z" fill="#d8d0d8"/><circle cx="7" cy="5" r="2.4" fill="#3e3e3e"/><circle cx="7" cy="5" r="1.2" fill="#d8d0d8"/></svg>
<div class="t" style="left:1237.4px;top:412.5px;font-size:12px;line-height:12px;color:#e0e0e0;">DRC Exclusions</div>
<div class="b" style="left:1195px;top:429.7px;width:16px;height:12px;background:#ff28e0;"></div>
<svg style="left:1217px;top:430.7px;" width="14" height="10" viewBox="0 0 14 10"><path d="M1 5 C3.5 0.8 10.5 0.8 13 5 C10.5 9.2 3.5 9.2 1 5 Z" fill="#d8d0d8"/><circle cx="7" cy="5" r="2.4" fill="#3e3e3e"/><circle cx="7" cy="5" r="1.2" fill="#d8d0d8"/></svg>
<div class="t" style="left:1237.4px;top:430.6px;font-size:12px;line-height:12px;color:#e0e0e0;">Anchors</div>
<div class="b" style="left:1195px;top:447.6px;width:16px;height:12px;background:#8a2082;"></div>
<svg style="left:1217px;top:448.6px;" width="14" height="10" viewBox="0 0 14 10"><path d="M1 5 C3.5 0.8 10.5 0.8 13 5 C10.5 9.2 3.5 9.2 1 5 Z" fill="#d8d0d8"/><circle cx="7" cy="5" r="2.4" fill="#3e3e3e"/><circle cx="7" cy="5" r="1.2" fill="#d8d0d8"/></svg>
<div class="t" style="left:1237.4px;top:448.5px;font-size:12px;line-height:12px;color:#e0e0e0;">Locked Item Shadow</div>
<div class="b" style="left:1195px;top:465.6px;width:16px;height:12px;background:#8a0c10;"></div>
<svg style="left:1217px;top:466.6px;" width="14" height="10" viewBox="0 0 14 10"><path d="M1 5 C3.5 0.8 10.5 0.8 13 5 C10.5 9.2 3.5 9.2 1 5 Z" fill="#d8d0d8"/><circle cx="7" cy="5" r="2.4" fill="#3e3e3e"/><circle cx="7" cy="5" r="1.2" fill="#d8d0d8"/></svg>
<div class="t" style="left:1237.4px;top:466.5px;font-size:12px;line-height:12px;color:#e0e0e0;">Colliding Courtyards</div>
<div class="b" style="left:1195px;top:483.6px;width:16px;height:12px;background:#cc78b2;"></div>
<svg style="left:1217px;top:484.6px;" width="14" height="10" viewBox="0 0 14 10"><path d="M1 5 C3.5 0.8 10.5 0.8 13 5 C10.5 9.2 3.5 9.2 1 5 Z" fill="#d8d0d8"/><circle cx="7" cy="5" r="2.4" fill="#3e3e3e"/><circle cx="7" cy="5" r="1.2" fill="#d8d0d8"/></svg>
<div class="t" style="left:1237.4px;top:484.5px;font-size:12px;line-height:12px;color:#e0e0e0;">Drawing Sheet</div>
<div class="b" style="left:1195px;top:501.5px;width:16px;height:12px;background:#2a2a2a;"></div>
<svg style="left:1217px;top:502.5px;" width="14" height="10" viewBox="0 0 14 10"><path d="M1 5 C3.5 0.8 10.5 0.8 13 5 C10.5 9.2 3.5 9.2 1 5 Z" fill="#d8d0d8"/><circle cx="7" cy="5" r="2.4" fill="#3e3e3e"/><circle cx="7" cy="5" r="1.2" fill="#d8d0d8"/></svg>
<div class="t" style="left:1237.4px;top:502.4px;font-size:12px;line-height:12px;color:#e0e0e0;">Grid</div>
<svg style="left:1195px;top:501.5px;" width="16" height="12" viewBox="0 0 16 12"><rect width="16" height="12" fill="#2c2c2c"/><rect x="8" y="0" width="4" height="4" fill="#111"/><rect x="4" y="4" width="4" height="4" fill="#111"/><rect x="12" y="4" width="4" height="4" fill="#111"/><rect x="0" y="8" width="4" height="4" fill="#111"/><rect x="12" y="8" width="4" height="4" fill="#111"/></svg>
<div class="t" style="left:1196.6px;top:675.8px;font-size:12px;line-height:12px;color:#e0e0e0;letter-spacing:-0.014px;">Presets (Ctrl+Tab):</div>
<div class="b" style="left:1196.6px;top:691.5px;width:200px;height:29.5px;background:#3e3e3e;border:1px solid #2a2a2a;border-radius:3px;"></div>
<div class="t" style="left:1207.0px;top:700.8px;font-size:12px;line-height:12px;color:#e0e0e0;">---</div>
<div class="t" style="left:1196.6px;top:726.8px;font-size:12px;line-height:12px;color:#e0e0e0;letter-spacing:0.167px;">Viewports (Shift+Tab):</div>
<div class="b" style="left:1196.6px;top:742.5px;width:200px;height:29.5px;background:#3e3e3e;border:1px solid #2a2a2a;border-radius:3px;"></div>
<div class="t" style="left:1207.0px;top:751.8px;font-size:12px;line-height:12px;color:#e0e0e0;">---</div>
<div class="b" style="left:1375px;top:0px;width:1px;height:781px;background:#383838;"></div>
<div class="b" style="left:1376px;top:0px;width:9px;height:781px;background:#ffffff;"></div>
<div class="b" style="left:-10px;top:155px;width:593px;height:627px;background:rgba(0,0,0,0.55);border-radius:0 6px 0 0;"></div>
<div class="b" style="left:-10px;top:156px;width:592px;height:625px;background:#393939;border-radius:0 5px 0 0;"></div>
<div class="b" style="left:-10px;top:156px;width:592px;height:28px;background:#2f2f2f;border-radius:0 5px 0 0;"></div>
<div class="t" style="left:41.6px;top:164.0px;font-size:13px;line-height:13px;color:#a4a4a4;letter-spacing:0.449px;-webkit-text-stroke:0.35px #a4a4a4;">Preferences</div>
<svg style="left:554.5px;top:162.5px;" width="15" height="15" viewBox="0 0 15 15"><circle cx="7.5" cy="7.5" r="7" fill="#6c6c6c"/><path d="M4.6 4.6 L10.4 10.4 M10.4 4.6 L4.6 10.4" stroke="#2e2e2e" stroke-width="1.8"/></svg>
<div class="b" style="left:0px;top:218.5px;width:99px;height:1px;background:#2e2e2e;"></div>
<div class="t" style="right:1376.0px;top:234.6px;font-size:13px;line-height:13px;color:#e0e0e0;">Angles</div>
<div class="b" style="left:-4px;top:257.5px;width:62.5px;height:27px;background:#414141;border:1px solid #2a2a2a;border-radius:3px;"></div>
<div class="t" style="left:64.0px;top:263.8px;font-size:12px;line-height:12px;color:#e0e0e0;">°</div>
<div class="b" style="left:-4px;top:309.5px;width:92.5px;height:29.5px;background:#434343;border:1px solid #2a2a2a;border-radius:3px;"></div>
<svg style="left:67.0px;top:321.75px;" width="10" height="5.5" viewBox="0 0 10 5.5"><path d="M0 0 H10 L5.0 5.5 Z" fill="#e8e8e8"/></svg>
<div class="b" style="left:-4px;top:368.8px;width:92.5px;height:29px;background:#434343;border:1px solid #2a2a2a;border-radius:3px;"></div>
<svg style="left:67.0px;top:380.75px;" width="10" height="5.5" viewBox="0 0 10 5.5"><path d="M0 0 H10 L5.0 5.5 Z" fill="#e8e8e8"/></svg>
<svg style="left:-10px;top:409px;" width="15" height="15" viewBox="0 0 15 15"><circle cx="7.5" cy="7.5" r="7" fill="#2e2e2e"/></svg>
<div class="t" style="left:8.4px;top:410.5px;font-size:13px;line-height:13px;color:#e0e0e0;letter-spacing:0.797px;">Top/bottom</div>
<div class="t" style="right:1305.0px;top:465.9px;font-size:13px;line-height:13px;color:#e0e0e0;letter-spacing:0.250px;">Warp mouse for this session</div>
<div class="b" style="left:0px;top:522.5px;width:99px;height:1px;background:#2e2e2e;"></div>
<div class="t" style="right:1320.5px;top:535.5px;font-size:13px;line-height:13px;color:#e0e0e0;font-style:italic;letter-spacing:0.100px;">modifier keys:</div>
<div class="t" style="right:1377.8px;top:600.4px;font-size:13px;line-height:13px;color:#e0e0e0;">Show context menu</div>
<div class="t" style="right:1362.8px;top:648.3px;font-size:13px;line-height:13px;color:#e0e0e0;">Pan selection</div>
<div class="b" style="left:-4px;top:678.2px;width:67.8px;height:53.5px;background:transparent;border:1px solid #2a2a2a;"></div>
<div class="t" style="left:3.3px;top:712.0px;font-size:13px;line-height:13px;color:#e0e0e0;letter-spacing:0.148px;">or tracks)</div>
<div class="b" style="left:0px;top:769px;width:582px;height:1px;background:#4a4a4a;"></div>
<div class="b" style="left:-10px;top:775.5px;width:22px;height:20px;background:#444444;border:1px solid #2a2a2a;border-radius:3px;"></div>
<div class="b" style="left:389.2px;top:775.5px;width:84px;height:20px;background:#444444;border:1px solid #2a2a2a;border-radius:3px;"></div>
<div class="b" style="left:480.2px;top:775.5px;width:84px;height:20px;background:#444444;border:1px solid #2a2a2a;border-radius:3px;"></div>
<div class="t" style="left:233.4px;top:204.3px;font-size:13px;line-height:13px;color:#dcdcdc;letter-spacing:0.285px;">Magnetic Points</div>
<div class="b" style="left:220px;top:219.5px;width:352px;height:1px;background:#2e2e2e;"></div>
<div class="t" style="left:230.2px;top:238.9px;font-size:13px;line-height:13px;color:#e0e0e0;letter-spacing:0.054px;">Snap to pads:</div>
<div class="b" style="left:401.5px;top:230.4px;width:160.3px;height:29.2px;background:#434343;border:1px solid #2a2a2a;border-radius:3px;"></div>
<div class="t" style="left:412.3px;top:238.9px;font-size:13px;line-height:13px;color:#e0e0e0;letter-spacing:0.362px;">Always</div>
<svg style="left:540.0px;top:242.75px;" width="10" height="5.5" viewBox="0 0 10 5.5"><path d="M0 0 H10 L5.0 5.5 Z" fill="#e8e8e8"/></svg>
<div class="t" style="left:230.2px;top:273.6px;font-size:13px;line-height:13px;color:#e0e0e0;letter-spacing:0.054px;">Snap to tracks and vias:</div>
<div class="b" style="left:401.5px;top:265.4px;width:160.3px;height:29.2px;background:#434343;border:1px solid #2a2a2a;border-radius:3px;"></div>
<div class="t" style="left:412.3px;top:273.6px;font-size:13px;line-height:13px;color:#e0e0e0;letter-spacing:0.362px;">Always</div>
<svg style="left:540.0px;top:277.75px;" width="10" height="5.5" viewBox="0 0 10 5.5"><path d="M0 0 H10 L5.0 5.5 Z" fill="#e8e8e8"/></svg>
<div class="t" style="left:230.2px;top:308.5px;font-size:13px;line-height:13px;color:#e0e0e0;letter-spacing:0.100px;">Snap to graphics:</div>
<div class="b" style="left:401.5px;top:300.4px;width:160.3px;height:29.2px;background:#434343;border:1px solid #2a2a2a;border-radius:3px;"></div>
<div class="t" style="left:412.3px;top:308.5px;font-size:13px;line-height:13px;color:#e0e0e0;letter-spacing:0.362px;">Always</div>
<svg style="left:540.0px;top:312.75px;" width="10" height="5.5" viewBox="0 0 10 5.5"><path d="M0 0 H10 L5.0 5.5 Z" fill="#e8e8e8"/></svg>
<div class="t" style="left:233.4px;top:354.8px;font-size:13px;line-height:13px;color:#dcdcdc;letter-spacing:0.041px;">Ratsnest</div>
<div class="b" style="left:220px;top:370px;width:352px;height:1px;background:#2e2e2e;"></div>
<svg style="left:233px;top:385px;" width="14" height="14" viewBox="0 0 14 14"><rect width="14" height="14" rx="2" fill="#8aa676"/><path d="M3.3 7.2 L5.9 9.8 L10.8 4.3" fill="none" stroke="#1e2418" stroke-width="1.8" stroke-linecap="round" stroke-linejoin="round"/></svg>
<div class="t" style="left:250.4px;top:385.6px;font-size:13px;line-height:13px;color:#e0e0e0;letter-spacing:0.176px;">Always show selected ratsnest</div>
<svg style="left:233px;top:412px;" width="14" height="14" viewBox="0 0 14 14"><rect x="0.5" y="0.5" width="13" height="13" rx="2" fill="#2f2f31" stroke="#2a2a2c"/></svg>
<div class="t" style="left:250.4px;top:412.6px;font-size:13px;line-height:13px;color:#e0e0e0;letter-spacing:0.206px;">Show ratsnest with curved lines</div>
<div class="t" style="left:230.8px;top:445.5px;font-size:13px;line-height:13px;color:#e0e0e0;letter-spacing:0.065px;">Ratsnest line thickness:</div>
<div class="b" style="left:380.5px;top:435.5px;width:121.6px;height:32.8px;background:#3c3c3c;border:1px solid #2a2a2a;border-radius:3px;"></div>
<div class="b" style="left:429.4px;top:436.5px;width:37px;height:30.8px;background:#444444;border-left:1px solid #2a2a2a;border-right:1px solid #2a2a2a;"></div>
<div class="b" style="left:466.4px;top:436.5px;width:34.7px;height:30.8px;background:#444444;border-radius:0 3px 3px 0;"></div>
<div class="t" style="left:389.5px;top:446.0px;font-size:13px;line-height:13px;color:#e0e0e0;letter-spacing:-0.089px;">5.0</div>
<div class="b" style="left:441px;top:451px;width:14px;height:2px;background:#eeeeee;"></div>
<div class="b" style="left:476.7px;top:451px;width:14.6px;height:2px;background:#eeeeee;"></div>
<div class="b" style="left:483px;top:444.5px;width:2px;height:15px;background:#eeeeee;"></div>
<div class="t" style="left:233.4px;top:493.7px;font-size:13px;line-height:13px;color:#dcdcdc;letter-spacing:0.224px;">Miscellaneous</div>
<div class="b" style="left:220px;top:508.5px;width:352px;height:1px;background:#2e2e2e;"></div>
<svg style="left:233px;top:524.4px;" width="14" height="14" viewBox="0 0 14 14"><rect width="14" height="14" rx="2" fill="#8aa676"/><path d="M3.3 7.2 L5.9 9.8 L10.8 4.3" fill="none" stroke="#1e2418" stroke-width="1.8" stroke-linecap="round" stroke-linejoin="round"/></svg>
<div class="t" style="left:250.3px;top:525.0px;font-size:13px;line-height:13px;color:#e0e0e0;letter-spacing:0.160px;">&lt;ESC&gt; clears net highlighting</div>
<svg style="left:233px;top:551.4px;" width="14" height="14" viewBox="0 0 14 14"><rect width="14" height="14" rx="2" fill="#8aa676"/><path d="M3.3 7.2 L5.9 9.8 L10.8 4.3" fill="none" stroke="#1e2418" stroke-width="1.8" stroke-linecap="round" stroke-linejoin="round"/></svg>
<div class="t" style="left:250.3px;top:552.0px;font-size:13px;line-height:13px;color:#e0e0e0;letter-spacing:0.120px;">Show page limits</div>
<svg style="left:233px;top:578.4px;" width="14" height="14" viewBox="0 0 14 14"><rect width="14" height="14" rx="2" fill="#8aa676"/><path d="M3.3 7.2 L5.9 9.8 L10.8 4.3" fill="none" stroke="#1e2418" stroke-width="1.8" stroke-linecap="round" stroke-linejoin="round"/></svg>
<div class="t" style="left:250.3px;top:579.0px;font-size:13px;line-height:13px;color:#e0e0e0;letter-spacing:0.351px;">Show courtyard collisions when moving/dragging</div>
<svg style="left:233px;top:605.4px;" width="14" height="14" viewBox="0 0 14 14"><rect x="0.5" y="0.5" width="13" height="13" rx="2" fill="#2f2f31" stroke="#2a2a2c"/></svg>
<div class="t" style="left:250.3px;top:606.0px;font-size:13px;line-height:13px;color:#e0e0e0;letter-spacing:0.416px;">Automatically refill zones</div>
<svg style="left:0px;top:0px;pointer-events:none;" width="1385" height="781" viewBox="0 0 1385 781"><defs><filter id="sh" x="-20%" y="-20%" width="140%" height="140%"><feGaussianBlur in="SourceAlpha" stdDeviation="2.6"/><feOffset dx="2.5" dy="3.5" result="b"/><feComponentTransfer><feFuncA type="linear" slope="0.35"/></feComponentTransfer><feMerge><feMergeNode/><feMergeNode in="SourceGraphic"/></feMerge></filter></defs><g filter="url(#sh)"><path d="M1330.8 15.5 L1301.4 82.2" stroke="#ff0000" stroke-width="5.6" stroke-linecap="round"/><path d="M1296.0 94.4 L1295.7 73.5 L1311.7 80.5 Z" fill="#ff0000" stroke="#ff0000" stroke-width="3" stroke-linejoin="round"/><path d="M1382.4 298.2 L1307.8 354.0" stroke="#ff0000" stroke-width="5.6" stroke-linecap="round"/><path d="M1297.1 362.0 L1307.1 343.6 L1317.6 357.6 Z" fill="#ff0000" stroke="#ff0000" stroke-width="3" stroke-linejoin="round"/><path d="M140.6 226.5 L213.9 339.2" stroke="#ff0000" stroke-width="5.6" stroke-linecap="round"/><path d="M221.2 350.3 L203.5 339.2 L218.2 329.6 Z" fill="#ff0000" stroke="#ff0000" stroke-width="3" stroke-linejoin="round"/></g></svg>
</body></html>
